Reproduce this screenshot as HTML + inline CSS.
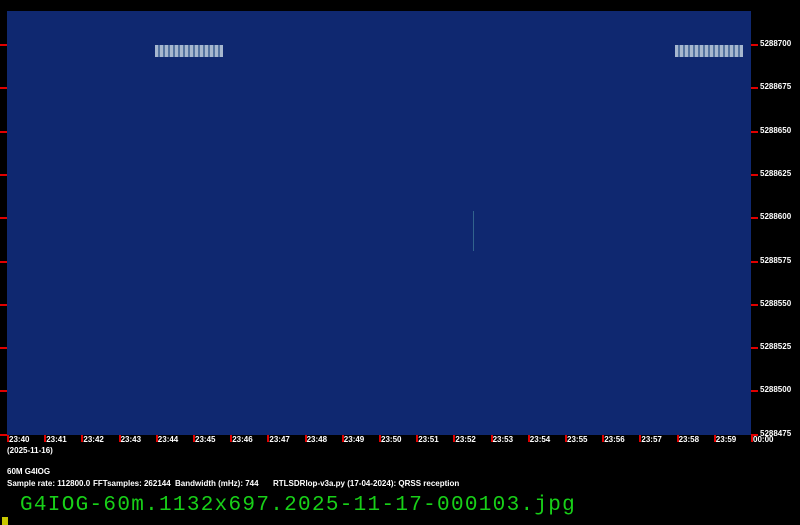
<!DOCTYPE html>
<html><head><style>
body{margin:0;width:800px;height:525px;background:#000;position:relative;overflow:hidden;font-family:"Liberation Sans",sans-serif;}
.plot{position:absolute;left:7px;top:11px;width:744px;height:424px;background:#0f2870;}
.t{position:absolute;color:#fff;font-size:8px;font-weight:bold;white-space:pre;}
.rt{position:absolute;width:7px;height:2px;background:#e00000;}
.bt{position:absolute;width:2px;height:7px;background:#e00000;top:435px;}
.big{position:absolute;left:20px;top:494px;color:#18d018;font-family:"Liberation Mono",monospace;font-size:21px;letter-spacing:1.3px;}
.sig{position:absolute;height:12px;width:68px;background:repeating-linear-gradient(90deg,#c0d0e0 0 3px,#6080a8 3px 5px);opacity:0.85;}
</style></head><body>
<div class="plot">
<div class="sig" style="left:148px;top:34px"></div>
<div class="sig" style="left:668px;top:34px"></div>
<div style="position:absolute;left:466px;top:200px;width:1px;height:40px;background:#4a8aa0;opacity:0.6"></div>
</div>
<div id="ticks"></div>
<div class="t" style="left:7px;top:446px">(2025-11-16)</div>
<div class="t" style="left:7px;top:467px">60M G4IOG</div>
<div class="t" style="left:7px;top:479px">Sample rate: 112800.0</div>
<div class="t" style="left:93px;top:479px">FFTsamples: 262144</div>
<div class="t" style="left:175px;top:479px">Bandwidth (mHz): 744</div>
<div class="t" style="left:273px;top:479px">RTLSDRlop-v3a.py (17-04-2024): QRSS reception</div>
<div class="big">G4IOG-60m.1132x697.2025-11-17-000103.jpg</div>
<div style="position:absolute;left:2px;top:517px;width:6px;height:8px;background:#c8c800"></div>
<script>
var h='';
var labs=[5288700,5288675,5288650,5288625,5288600,5288575,5288550,5288525,5288500,5288475];
for(var i=0;i<10;i++){var y=44+i*43.3;
h+='<div class="rt" style="left:0;top:'+y+'px"></div><div class="rt" style="left:751px;top:'+y+'px"></div>';
h+='<div class="t" style="left:760px;top:'+(y-5)+'px">'+labs[i]+'</div>';}
for(var j=0;j<21;j++){var x=7+j*37.2;var m=40+j;var s=m<60?('23:'+m):'00:00';
h+='<div class="bt" style="left:'+x+'px"></div><div class="t" style="left:'+(x+2)+'px;top:435px">'+s+'</div>';}
document.getElementById('ticks').innerHTML=h;
</script>
</body></html>
